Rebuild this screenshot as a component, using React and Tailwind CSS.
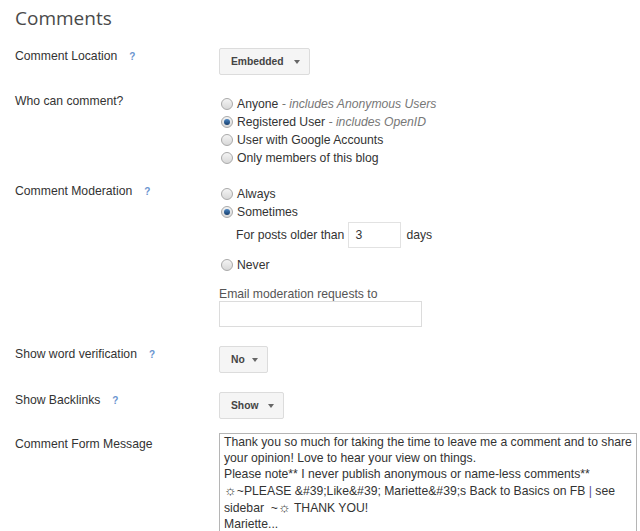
import React from 'react';

const sans = { fontFamily: '"Liberation Sans", Arial, sans-serif' };

function Help() {
  return <span className="ml-[12px] text-[10px] font-bold text-[#6a94d0]">?</span>;
}

function Label({ children, help }) {
  return (
    <div className="w-[204px] shrink-0 text-[12.2px] leading-[16px] text-[#333]">
      {children}
      {help && <Help />}
    </div>
  );
}

function Radio({ checked, children }) {
  return (
    <div className="flex h-[18px] items-center">
      <span className="ml-[2px] mr-[4px] flex h-[12px] w-[12px] items-center justify-center rounded-full border border-[#a9a9a9] bg-gradient-to-b from-[#f4f4f4] to-[#d8d8d8]">
        {checked && <span className="h-[6px] w-[6px] rounded-full bg-gradient-to-b from-[#4a86c4] to-[#153d6b]" />}
      </span>
      <span className="text-[12.2px] text-[#333]">{children}</span>
    </div>
  );
}

function Dropdown({ label, width }) {
  return (
    <div
      className={`flex h-[27px] items-center justify-between rounded-[2px] border border-[#dcdcdc] bg-[#f5f5f5] pl-[11px] pr-[9px] ${width}`}
    >
      <span className="text-[10.3px] font-bold text-[#444]">{label}</span>
      <span className="h-0 w-0 border-x-[3px] border-t-[4px] border-x-transparent border-t-[#666]" />
    </div>
  );
}

export default function App() {
  return (
    <div className="h-[531px] w-[640px] overflow-hidden bg-white pl-[15px]" style={sans}>
      <h1 className="pt-[6px] text-[19px] leading-[24px] text-[#4a4a4a]" style={{ fontFamily: '"Open Sans", sans-serif' }}>
        Comments
      </h1>

      {/* Comment Location */}
      <div className="mt-[18px] flex">
        <Label help>Comment Location</Label>
        <Dropdown label="Embedded" width="w-[91px]" />
      </div>

      {/* Who can comment */}
      <div className="mt-[18px] flex">
        <Label>Who can comment?</Label>
        <div className="mt-[2px]">
          <Radio>
            Anyone <span className="italic text-[#777]">- includes Anonymous Users</span>
          </Radio>
          <Radio checked>
            Registered User <span className="italic text-[#777]">- includes OpenID</span>
          </Radio>
          <Radio>User with Google Accounts</Radio>
          <Radio>Only members of this blog</Radio>
        </div>
      </div>

      {/* Comment Moderation */}
      <div className="mt-[16px] flex">
        <Label help>Comment Moderation</Label>
        <div className="mt-[2px]">
          <Radio>Always</Radio>
          <Radio checked>Sometimes</Radio>
          <div className="mt-[1px] flex items-center pl-[17px] text-[12.2px] text-[#333]">
            <span>For posts older than</span>
            <div className="ml-[4px] flex h-[26px] w-[53px] items-center border border-[#e2e2e2] px-[6px]">3</div>
            <span className="ml-[5px]">days</span>
          </div>
          <div className="mt-[8px]">
            <Radio>Never</Radio>
          </div>
          <div className="mt-[12px] text-[12.2px] leading-[16px] text-[#555]">Email moderation requests to</div>
          <div className="mt-[-1px] h-[26px] w-[203px] border border-[#dcdcdc]" />
        </div>
      </div>

      {/* Word verification */}
      <div className="mt-[19px] flex">
        <Label help>Show word verification</Label>
        <Dropdown label="No" width="w-[49px]" />
      </div>

      {/* Backlinks */}
      <div className="mt-[19px] flex">
        <Label help>Show Backlinks</Label>
        <Dropdown label="Show" width="w-[65px]" />
      </div>

      {/* Comment Form Message */}
      <div className="mt-[14px] flex">
        <div className="pt-[3px]">
          <Label>Comment Form Message</Label>
        </div>
        <div className="h-[120px] w-[418px] border border-[#b5b5b5] px-[4px] pt-[0px] text-[12.2px] leading-[16px] whitespace-nowrap text-[#333]">
          <div>Thank you so much for taking the time to leave me a comment and to share</div>
          <div>your opinion! Love to hear your view on things.</div>
          <div>Please note** I never publish anonymous or name-less comments**</div>
          <div>
            <span className="text-[14px]">☼</span>~PLEASE &amp;#39;Like&amp;#39; Mariette&amp;#39;s Back to Basics on FB{' '}
            <span className="text-[#5b4f9e]">|</span> see
          </div>
          <div>
            sidebar&nbsp; ~<span className="text-[14px]">☼</span> THANK YOU!
          </div>
          <div>Mariette...</div>
        </div>
      </div>
    </div>
  );
}
